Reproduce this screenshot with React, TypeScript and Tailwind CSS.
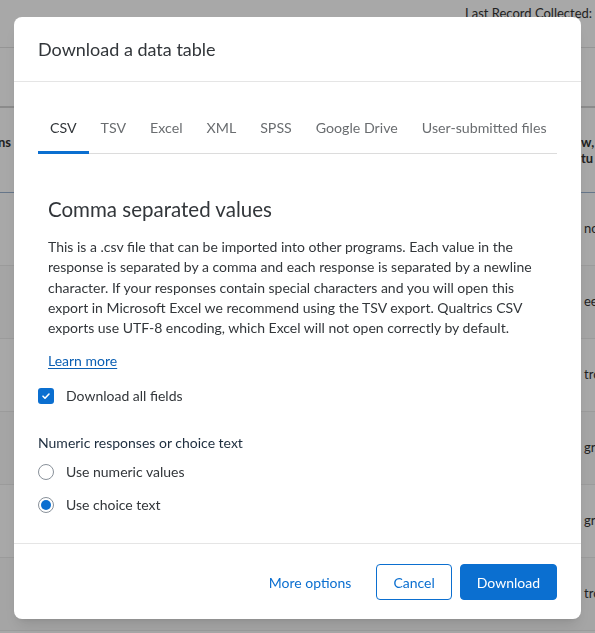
import React from 'react';

const tabs = ['CSV', 'TSV', 'Excel', 'XML', 'SPSS', 'Google Drive', 'User-submitted files'];

const rowTexts = ['no', 'ee', 'tro', 'gre', 'gre', 'tro'];

const BackgroundPage: React.FC = () => (
    <div className="min-h-screen bg-white text-[#333]">
        {/* top bar */}
        <div className="h-[48px] border-b border-[#e3e3e3] pl-[465px] pt-[4px] overflow-hidden whitespace-nowrap text-[13px] leading-[18px]">
            Last Record Collected:
        </div>
        <div className="h-[60px] border-b-2 border-[#d4d4d4]" />
        {/* table header */}
        <div className="h-[85px] flex justify-between border-b border-[#9bb3d1] font-bold text-[13px] leading-4 overflow-hidden">
            <span className="pt-[26px] -ml-[2px]">ns</span>
            <span className="pt-[26px] w-[14px] overflow-hidden whitespace-nowrap">
                w,
                <br />
                tu
            </span>
        </div>
        {rowTexts.map((t, i) => (
            <div
                key={i}
                className={`h-[73px] flex items-center border-b border-[#ececec] text-[13px] overflow-hidden whitespace-nowrap pl-[584px] ${i % 2 === 0 ? 'bg-white' : 'bg-[#fafafa]'}`}
            >
                {t}
            </div>
        ))}
    </div>
);

const Radio: React.FC<{ checked?: boolean; label: string }> = ({ checked, label }) => (
    <label className="flex items-center leading-5">
        <span className="w-4 h-4 rounded-full border border-[#89919a] bg-white flex items-center justify-center shrink-0">
            {checked && <span className="w-[10px] h-[10px] rounded-full bg-[#0b6fd0]" />}
        </span>
        <span className="ml-[12px] text-[14px] text-[#32363a]">{label}</span>
    </label>
);

export default function App() {
    return (
        <div className="font-['Lato',sans-serif]">
            <BackgroundPage />

            {/* dimming overlay */}
            <div className="fixed inset-0 bg-black/[0.34]" />

            {/* modal */}
            <div className="fixed inset-0 flex justify-center items-start pt-[17px]">
                <div className="w-[567px] bg-white rounded-lg shadow-lg">
                    {/* Header */}
                    <div className="h-[65px] px-6 pt-px flex items-center border-b border-[#e5e5e5]">
                        <h2 className="text-[18px] text-[#32363a]">Download a data table</h2>
                    </div>

                    <div className="px-6">
                        {/* Tabs */}
                        <div className="mt-[24px] flex border-b border-[#dcdcdc]">
                            {tabs.map((tab, i) => (
                                <button
                                    key={tab}
                                    className={`relative px-3 pt-3 pb-[15px] leading-5 text-[14.2px] whitespace-nowrap ${i === 0 ? 'text-[#32363a]' : 'text-[#6a6d70]'}`}
                                >
                                    {tab}
                                    {i === 0 && (
                                        <span className="absolute left-0 right-0 -bottom-px h-[3px] bg-[#0b6fd0]" />
                                    )}
                                </button>
                            ))}
                        </div>

                        {/* Description */}
                        <div className="px-[10px] pt-[41px]">
                            <h3 className="text-[20.5px] leading-7 text-[#32363a]">Comma separated values</h3>
                            <p className="mt-[14px] text-[14px] leading-[20.25px] text-[#32363a]">
                                This is a .csv file that can be imported into other programs. Each value in the
                                response is separated by a comma and each response is separated by a newline
                                character. If your responses contain special characters and you will open this
                                export in Microsoft Excel we recommend using the TSV export. Qualtrics CSV
                                exports use UTF-8 encoding, which Excel will not open correctly by default.
                            </p>
                            <a className="inline-block mt-[13px] text-[14px] leading-5 text-[#0b5fb3] underline underline-offset-2">
                                Learn more
                            </a>
                        </div>

                        {/* Checkbox */}
                        <label className="mt-[14px] flex items-center leading-5">
                            <span className="w-4 h-4 rounded-[3px] bg-[#0b6fd0] flex items-center justify-center shrink-0">
                                <svg width="10" height="10" viewBox="0 0 10 10" fill="none">
                                    <path d="M2 5.2l2 2L8 3" stroke="white" strokeWidth="1.6" strokeLinecap="round" strokeLinejoin="round" />
                                </svg>
                            </span>
                            <span className="ml-[12px] text-[14px] text-[#32363a]">Download all fields</span>
                        </label>

                        {/* Numeric / choice text */}
                        <div className="mt-[27px] text-[14px] leading-5 text-[#1d2d3e]">Numeric responses or choice text</div>
                        <div className="mt-[9px] flex flex-col gap-[13px]">
                            <Radio label="Use numeric values" />
                            <Radio checked label="Use choice text" />
                        </div>
                    </div>

                    {/* Footer */}
                    <div className="mt-[28px] border-t border-[#e5e5e5] px-6 pt-5 pb-[19px] flex justify-end gap-2">
                        <button className="h-9 px-4 border border-transparent rounded text-[14px] text-[#0b6fd0]">More options</button>
                        <button className="h-9 px-4 border border-[#0b6fd0] rounded bg-white text-[14px] text-[#0b6fd0]">Cancel</button>
                        <button className="h-9 px-4 border border-[#0b6fd0] rounded bg-[#0b6fd0] text-[14px] text-white">Download</button>
                    </div>
                </div>
            </div>
        </div>
    );
}
